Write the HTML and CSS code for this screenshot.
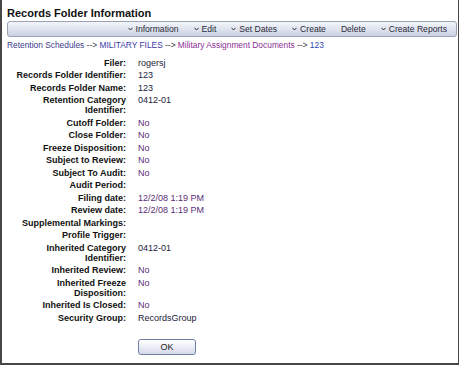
FILE: index.html
```html
<!DOCTYPE html>
<html lang="en">
<head>
  <meta charset="UTF-8">
  <meta name="viewport" content="width=device-width, initial-scale=1">
  <title>Records Folder Information</title>
  <link rel="stylesheet" href="styles.css">
</head>
<body>

  <div class="frame">
    <h1>Records Folder Information</h1>

    <!-- action bar -->
    <div class="toolbar">
      <span class="tb-item"><svg class="chev" width="5" height="4" viewBox="0 0 5 4"><path d="M0.5 0.8 L2.5 3 L4.5 0.8" fill="none" stroke="#333" stroke-width="1"/></svg>Information</span>
      <span class="tb-item"><svg class="chev" width="5" height="4" viewBox="0 0 5 4"><path d="M0.5 0.8 L2.5 3 L4.5 0.8" fill="none" stroke="#333" stroke-width="1"/></svg>Edit</span>
      <span class="tb-item"><svg class="chev" width="5" height="4" viewBox="0 0 5 4"><path d="M0.5 0.8 L2.5 3 L4.5 0.8" fill="none" stroke="#333" stroke-width="1"/></svg>Set Dates</span>
      <span class="tb-item"><svg class="chev" width="5" height="4" viewBox="0 0 5 4"><path d="M0.5 0.8 L2.5 3 L4.5 0.8" fill="none" stroke="#333" stroke-width="1"/></svg>Create</span>
      <span class="tb-item">Delete</span>
      <span class="tb-item"><svg class="chev" width="5" height="4" viewBox="0 0 5 4"><path d="M0.5 0.8 L2.5 3 L4.5 0.8" fill="none" stroke="#333" stroke-width="1"/></svg>Create Reports</span>
    </div>

    <!-- breadcrumb -->
    <div class="crumbs">
      <a href="#" class="c1">Retention Schedules</a> --&gt;
      <a href="#" class="c2">MILITARY FILES</a> --&gt;
      <a href="#" class="c3">Military Assignment Documents</a> --&gt;
      <a href="#" class="c4">123</a>
    </div>

    <!-- folder fields -->
    <div class="fields">
      <div class="lbl">Filer:</div><div class="val">rogersj</div>
      <div class="lbl">Records Folder Identifier:</div><div class="val">123</div>
      <div class="lbl">Records Folder Name:</div><div class="val">123</div>
      <div class="lbl">Retention Category Identifier:</div><div class="val">0412-01</div>
      <div class="lbl">Cutoff Folder:</div><div class="val alt">No</div>
      <div class="lbl">Close Folder:</div><div class="val alt">No</div>
      <div class="lbl">Freeze Disposition:</div><div class="val alt">No</div>
      <div class="lbl">Subject to Review:</div><div class="val alt">No</div>
      <div class="lbl">Subject To Audit:</div><div class="val alt">No</div>
      <div class="lbl">Audit Period:</div><div class="val"></div>
      <div class="lbl">Filing date:</div><div class="val alt">12/2/08 1:19 PM</div>
      <div class="lbl">Review date:</div><div class="val alt">12/2/08 1:19 PM</div>
      <div class="lbl">Supplemental Markings:</div><div class="val"></div>
      <div class="lbl">Profile Trigger:</div><div class="val"></div>
      <div class="lbl">Inherited Category Identifier:</div><div class="val">0412-01</div>
      <div class="lbl">Inherited Review:</div><div class="val alt">No</div>
      <div class="lbl">Inherited Freeze Disposition:</div><div class="val alt">No</div>
      <div class="lbl">Inherited Is Closed:</div><div class="val alt">No</div>
      <div class="lbl">Security Group:</div><div class="val">RecordsGroup</div>
    </div>

    <div class="actions">
      <button class="ok">OK</button>
    </div>
  </div>

</body>
</html>
```

FILE: styles.css
```css
body {
  margin: 0;
  background: #fff;
  font-family: "Liberation Sans", Arial, sans-serif;
  color: #1a1a2a;
}

.frame {
  box-sizing: border-box;
  width: 459px;
  height: 365px;
  border-left: 2px solid #474747;
  border-right: 1px solid #474747;
  border-bottom: 2px solid #474747;
  padding: 6px 1px 0 5px;
}

h1 {
  margin: 0;
  font-size: 11px;
  line-height: 14px;
  font-weight: bold;
  color: #111;
}

/* action bar */
.toolbar {
  box-sizing: border-box;
  height: 16px;
  margin-top: 1px;
  border: 1px solid #9aa2b4;
  border-radius: 3px;
  background: linear-gradient(#f3f5fa, #dde2ee 55%, #c9d0e2);
  display: flex;
  justify-content: flex-end;
  align-items: center;
  gap: 15px;
  padding-right: 9px;
  font-size: 8.6px;
  color: #2a2a3a;
}

.tb-item {
  display: flex;
  align-items: center;
}

.chev {
  margin-right: 3px;
}

/* breadcrumb */
.crumbs {
  margin-top: 2px;
  font-size: 8.4px;
  line-height: 13px;
  color: #333;
}

.crumbs a {
  text-decoration: none;
}

.c1 { color: #3b3b8a; }
.c2 { color: #3a3aa6; }
.c3 { color: #8a3095; }
.c4 { color: #2f45b0; }

/* fields */
.fields {
  margin-top: 5.5px;
  display: grid;
  grid-template-columns: 119px 1fr;
  column-gap: 12px;
  row-gap: 2.5px;
  font-size: 9px;
  line-height: 10px;
}

.lbl {
  text-align: right;
  font-weight: bold;
  color: #111;
}

.val {
  color: #22223a;
}

.val.alt {
  color: #5a2d78;
}

.actions {
  margin-top: 13px;
  padding-left: 131px;
}

.ok {
  width: 58px;
  height: 16px;
  padding: 0;
  border: 1px solid #6d7fa6;
  border-radius: 3px;
  background: linear-gradient(#ffffff, #eceef6 50%, #d4d8ea);
  font-family: "Liberation Sans", Arial, sans-serif;
  font-size: 9px;
  color: #222;
}
```
